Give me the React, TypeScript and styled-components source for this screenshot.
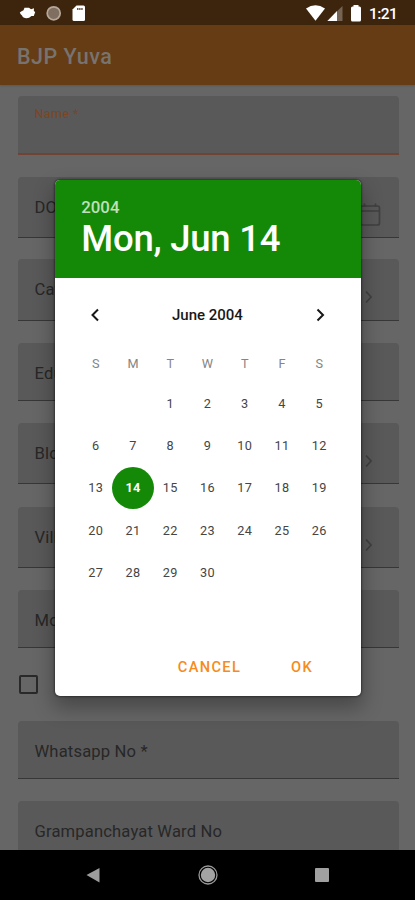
import React from "react";
import styled, { createGlobalStyle } from "styled-components";

const GlobalStyle = createGlobalStyle`
  * { box-sizing: border-box; }
  body { margin: 0; background: #666; font-family: Roboto, "Liberation Sans", sans-serif; }
  button { font: inherit; border: 0; padding: 0; background: none; }
`;

const Screen = styled.div`
  position: relative;
  display: flex;
  flex-direction: column;
  width: 415px;
  height: 900px;
  overflow: hidden;
  background: #666;
`;

const StatusBar = styled.header`
  display: flex;
  justify-content: space-between;
  flex: none;
  height: 25px;
  background: #3d240d;
`;

const StatusClock = styled.span`
  width: 31px;
  color: #fff;
  font-size: 15.5px;
  font-weight: 500;
  line-height: 28px;
  letter-spacing: -0.6px;
`;

const StatusSide = styled.div`
  display: flex;
  svg { display: block; }
`;

const AppBar = styled.div`
  flex: none;
  height: 60px;
  padding-left: 17px;
  background: #663c14;
  color: #777371;
  font-size: 21.5px;
  font-weight: 500;
  letter-spacing: 0.5px;
  line-height: 63px;
  box-shadow: 0 1px 2px rgba(0, 0, 0, 0.15);
`;

const Form = styled.main`
  flex: 1;
  min-height: 0;
  overflow: hidden;
  display: flex;
  flex-direction: column;
  padding: 11.3px 16.5px 0 17.5px;
`;

const Field = styled.div<{ $height: number; $gap: number; $active?: boolean }>`
  flex: none;
  height: ${(p) => p.$height}px;
  margin-bottom: ${(p) => p.$gap}px;
  display: flex;
  justify-content: space-between;
  padding: 0 17px;
  border-radius: 4px 4px 0 0;
  background: #595959;
  border-bottom: ${(p) => (p.$active ? "2px solid #704332" : "1.5px solid #373737")};
`;

const FieldLabel = styled.label<{ $active?: boolean }>`
  color: ${(p) => (p.$active ? "#7b4622" : "#272727")};
  font-size: ${(p) => (p.$active ? 12.5 : 16.6)}px;
  line-height: ${(p) => (p.$active ? 35 : 61)}px;
  letter-spacing: ${(p) => (p.$active ? 0.4 : 0.15)}px;
`;

const FieldIcon = styled.svg<{ $shift: number; $top: number }>`
  display: block;
  margin: ${(p) => p.$top}px ${(p) => p.$shift}px 0 0;
  fill: none;
  stroke: #404040;
  stroke-width: 1.7;
`;

const CheckRow = styled.div`
  flex: none;
  height: 19px;
  margin: 27px 0 27.2px 1px;
`;

const CheckBox = styled.div`
  width: 19px;
  height: 19px;
  border: 2px solid #292929;
  border-radius: 2px;
`;

const NavBar = styled.nav`
  flex: none;
  height: 50px;
  display: flex;
  justify-content: space-around;
  align-items: center;
  padding: 0 36.5px;
  background: #000;
  svg { display: block; }
`;

const Dialog = styled.section`
  position: absolute;
  left: 55.3px;
  top: 180px;
  width: 305.3px;
  height: 515.5px;
  display: flex;
  flex-direction: column;
  border-radius: 5px;
  background: #fff;
  box-shadow: 0 0 2px 1px rgba(0, 0, 0, 0.38), 0 10px 20px 2px rgba(0, 0, 0, 0.3);
`;

const DialogHeader = styled.div`
  flex: none;
  height: 98px;
  padding: 17px 26px 0;
  border-radius: 5px 5px 0 0;
  background: #148907;
`;

const Year = styled.div`
  color: #c0e0bd;
  font-size: 16.8px;
  font-weight: 500;
  line-height: 20px;
`;

const SelectedDate = styled.div`
  color: #fff;
  font-size: 36.5px;
  font-weight: 500;
  line-height: 43px;
  letter-spacing: -0.25px;
  white-space: nowrap;
`;

const MonthBar = styled.div`
  flex: none;
  height: 73px;
  display: flex;
  justify-content: space-between;
  align-items: center;
  padding: 0 31px 0 30px;
  svg { display: block; }
`;

const MonthName = styled.span`
  color: #181818;
  font-size: 15px;
  font-weight: 500;
`;

const Week = styled.div<{ $height: number }>`
  flex: none;
  height: ${(p) => p.$height}px;
  display: grid;
  grid-template-columns: repeat(7, 37.25px);
  justify-content: center;
  align-items: center;
  justify-items: center;
  padding-right: 1px;
`;

const WeekDay = styled.span`
  color: #858585;
  font-size: 12.7px;
`;

const Day = styled.span<{ $selected?: boolean }>`
  display: flex;
  align-items: center;
  justify-content: center;
  width: 42px;
  height: 42px;
  border-radius: 50%;
  background: ${(p) => (p.$selected ? "#148907" : "transparent")};
  color: ${(p) => (p.$selected ? "#fff" : "#454545")};
  font-size: 12.7px;
  font-weight: ${(p) => (p.$selected ? 700 : 400)};
  letter-spacing: 0.2px;
`;

const Weeks = styled.div`
  margin-top: 7.2px;
`;

const Actions = styled.div`
  flex: 1;
  display: flex;
  justify-content: flex-end;
  align-items: flex-end;
  gap: 50px;
  padding: 0 47.5px 19px 0;
`;

const ActionButton = styled.button`
  color: #f68b20;
  font-size: 14.6px;
  font-weight: 500;
  line-height: 20px;
  letter-spacing: 1.35px;
`;

type FieldData = { label: string; height: number; gap: number; icon?: "calendar" | "chevron" };

const fields: FieldData[] = [
  { label: "DOB *", height: 60.7, gap: 21.8, icon: "calendar" },
  { label: "Category *", height: 61.3, gap: 21.9, icon: "chevron" },
  { label: "Education", height: 58.6, gap: 22 },
  { label: "Block *", height: 60.8, gap: 22.5, icon: "chevron" },
  { label: "Village *", height: 61.7, gap: 21.7, icon: "chevron" },
  { label: "Mobile No *", height: 57.8, gap: 0 },
];

const weeks: (number | null)[][] = [
  [null, null, 1, 2, 3, 4, 5],
  [6, 7, 8, 9, 10, 11, 12],
  [13, 14, 15, 16, 17, 18, 19],
  [20, 21, 22, 23, 24, 25, 26],
  [27, 28, 29, 30, null, null, null],
];

const CalendarIcon = () => (
  <FieldIcon $shift={1} $top={25} width="22" height="26" viewBox="0 0 22 26">
    <rect x="1.5" y="4" width="19" height="19" rx="2" />
    <path d="M1.5 9h19M5.5 1.5V5M16.5 1.5V5" />
  </FieldIcon>
);

const ChevronIcon = () => (
  <FieldIcon $shift={8.5} $top={31} width="9" height="14" viewBox="0 0 9 14">
    <path d="M2 1.5 7 7l-5 5.5" />
  </FieldIcon>
);

const MonthArrow = ({ next }: { next?: boolean }) => (
  <svg width="20" height="20" viewBox="0 0 20 20" fill="none" stroke="#171717" strokeWidth="2">
    <path d={next ? "M7.5 4.5 13 10l-5.5 5.5" : "M13 4.5 7.5 10l5.5 5.5"} />
  </svg>
);

export default function App() {
  return (
    <>
      <GlobalStyle />
      <Screen>
        <StatusBar>
          <StatusSide>
            <svg width="95" height="25" viewBox="0 0 95 25">
              <path
                d="M19.800 12.500Q21.500 11.200 23.500 10.200L24.500 7.800H29L31 9.200 34 8.300 33.800 11 35.200 12 33.800 16 31.500 16Q29 18.300 26.500 18.200 23 18.200 22 15.500 20.500 14.500 19.800 12.500z"
                fill="#fff"
              />
              <circle cx="53.700" cy="13.300" r="6.500" fill="#806e60" stroke="#b5a79a" strokeWidth="1.700" />
              <path
                d="M76.500 5.500h7q1.500 0 1.500 1.500v12.500q0 1.500-1.500 1.500H74q-1.500 0-1.500-1.500V9.500z"
                fill="#fff"
              />
              <path d="M77 9h6" stroke="#3d240d" strokeWidth="1.600" strokeDasharray="1.500 .6" />
            </svg>
          </StatusSide>
          <StatusSide>
            <svg width="66" height="25" viewBox="304 0 66 25">
              <path d="M307 8.500q9.500-6.500 19 0L316.500 20.700z" fill="#fff" />
              <path d="M343.500 6v15H328z" fill="#756353" />
              <path d="M338 11v10h-9.500z" fill="#fff" />
              <path
                d="M354.500 5h5v1.500h1q1.500 0 1.500 1.500v12q0 1.500-1.500 1.500h-7Q352 21.500 352 20V8q0-1.500 1.500-1.500h1z"
                fill="#fff"
              />
            </svg>
            <StatusClock>1:21</StatusClock>
            <svg width="15" height="25" />
          </StatusSide>
        </StatusBar>
        <AppBar>BJP Yuva</AppBar>
        <Form>
          <Field $height={58.5} $gap={22.2} $active>
            <FieldLabel $active>Name *</FieldLabel>
          </Field>
          {fields.map((f) => (
            <Field key={f.label} $height={f.height} $gap={f.gap}>
              <FieldLabel>{f.label}</FieldLabel>
              {f.icon === "calendar" && <CalendarIcon />}
              {f.icon === "chevron" && <ChevronIcon />}
            </Field>
          ))}
          <CheckRow>
            <CheckBox />
          </CheckRow>
          <Field $height={58.5} $gap={21.2}>
            <FieldLabel>Whatsapp No *</FieldLabel>
          </Field>
          <Field $height={60} $gap={0}>
            <FieldLabel>Grampanchayat Ward No</FieldLabel>
          </Field>
        </Form>
        <NavBar>
          <svg width="22" height="22" viewBox="0 0 22 22">
            <path d="M3.500 11 16.500 4v14.500z" fill="#9d9d9d" />
          </svg>
          <svg width="22" height="22" viewBox="0 0 22 22">
            <circle cx="11" cy="11" r="9" fill="none" stroke="#999" strokeWidth="1.300" />
            <circle cx="11" cy="11" r="7.200" fill="#a3a3a3" />
          </svg>
          <svg width="22" height="22" viewBox="0 0 22 22">
            <rect x="4" y="4" width="14" height="14" rx="1" fill="#a0a0a0" />
          </svg>
        </NavBar>

        <Dialog>
          <DialogHeader>
            <Year>2004</Year>
            <SelectedDate>Mon, Jun 14</SelectedDate>
          </DialogHeader>
          <MonthBar>
            <MonthArrow />
            <MonthName>June 2004</MonthName>
            <MonthArrow next />
          </MonthBar>
          <Week $height={24}>
            {["S", "M", "T", "W", "T", "F", "S"].map((d, i) => (
              <WeekDay key={i}>{d}</WeekDay>
            ))}
          </Week>
          <Weeks>
            {weeks.map((week, i) => (
              <Week key={i} $height={42.3}>
                {week.map((d, j) => (
                  <Day key={j} $selected={d === 14}>
                    {d}
                  </Day>
                ))}
              </Week>
            ))}
          </Weeks>
          <Actions>
            <ActionButton>CANCEL</ActionButton>
            <ActionButton>OK</ActionButton>
          </Actions>
        </Dialog>
      </Screen>
    </>
  );
}
